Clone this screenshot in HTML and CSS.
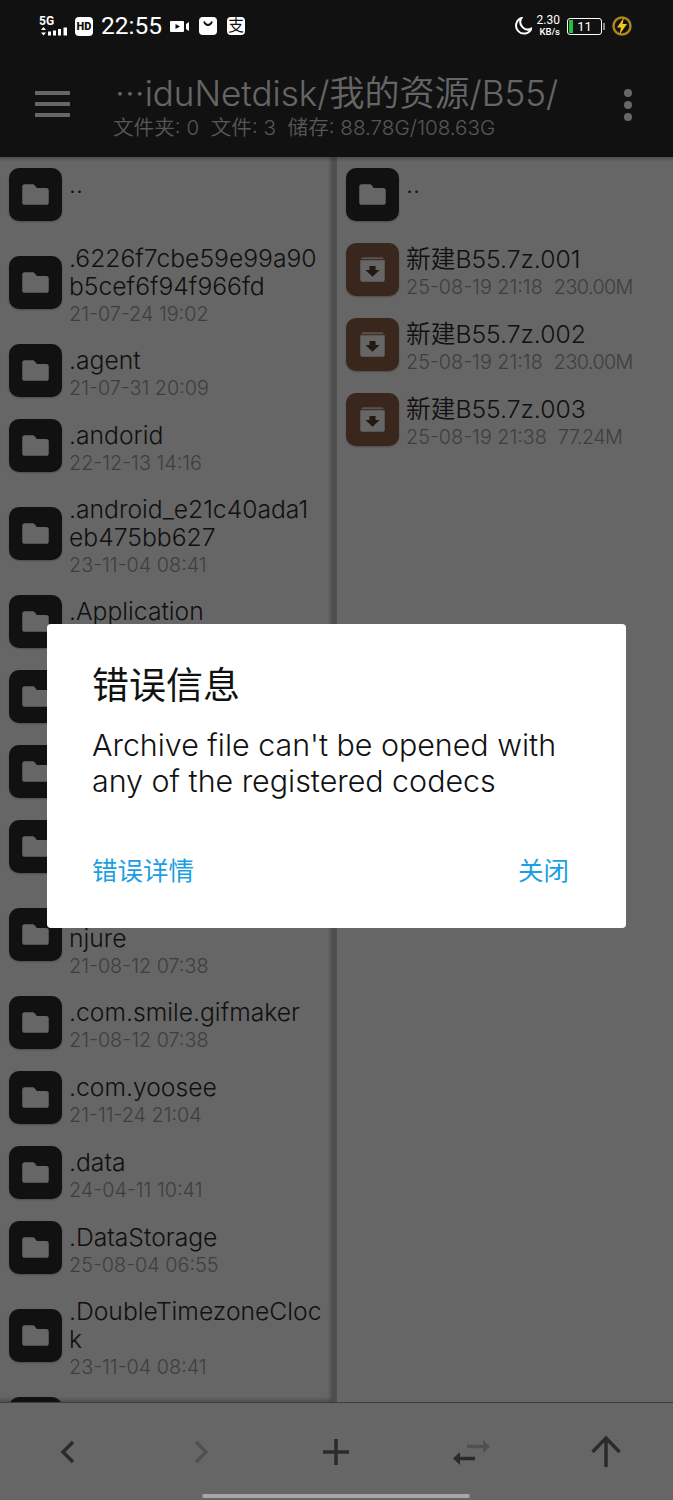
FILE: index.html
```html
<!DOCTYPE html>
<html lang="zh-CN">
<head>
	<meta charset="UTF-8">
	<meta content="width=device-width, initial-scale=1.0" name="viewport">
	<title>错误信息</title>
	<link rel="stylesheet" href="styles.css">
</head>
<body>
<svg width="0" height="0" class="defs">
	<symbol id="folder" viewBox="0 0 52 52">
		<path d="M15.500 16h8a2 2 0 0 1 1.500.700l2.300 2.800h9.200a2.500 2.500 0 0 1 2.500 2.500V33.500a2.500 2.500 0 0 1-2.500 2.500h-21a2.500 2.500 0 0 1-2.500-2.500v-15a2.500 2.500 0 0 1 2.500-2.500z" fill="#fff"/>
	</symbol>
	<symbol id="archive" viewBox="0 0 52 52">
		<path d="M17 14h18a2 2 0 0 1 2 2H15a2 2 0 0 1 2-2z" fill="#fff" opacity=".7"/>
		<path d="M14 17h24v19a2 2 0 0 1-2 2H16a2 2 0 0 1-2-2z" fill="#fff"/>
		<path d="M23 22.500h6v4h4l-7 6.500-7-6.500h4z" fill="#5a3d2e"/>
	</symbol>
</svg>

<div class="app">
	<header class="appbar">
		<div class="status">
			<div class="status-left">
				<div class="net">
					<span class="net-label">5G</span>
					<svg width="30" height="9" viewBox="0 0 30 9">
						<path d="M4.500 0 7 3H2zM4.500 8.500 2 5.500h5z" fill="#fff"/>
						<path d="M9 4.500h3v4H9zM14 3.500h3v5h-3zM19 2h3v6.500h-3zM24.500.5h3.500v8h-3.500z" fill="#fff"/>
					</svg>
				</div>
				<span class="hd">HD</span>
				<span class="clock">22:55</span>
				<svg class="cam" width="19" height="11" viewBox="0 0 19 11">
					<path d="M1 0h12a1 1 0 0 1 1 1v9a1 1 0 0 1-1 1H1a1 1 0 0 1-1-1V1a1 1 0 0 1 1-1z" fill="#fff"/>
					<path d="M5.500 3 10 5.500 5.500 8z" fill="#111"/>
					<path d="M16 3 19 1v9l-3-2z" fill="#fff"/>
				</svg>
				<svg width="18" height="18" viewBox="0 0 18 18">
					<rect width="18" height="18" rx="4" fill="#fff"/>
					<path d="M5 4.500c.8 2.600 2.500 3.500 4 3.500s3.200-.9 4-3.500" fill="none" stroke="#111" stroke-width="1.800"/>
				</svg>
				<span class="alipay">支</span>
			</div>
			<div class="status-right">
				<svg class="moon" width="17" height="18" viewBox="0 0 17 18">
					<path d="M6.500 1A8 8 0 1 0 16.500 11.500 7.500 7.500 0 0 1 6.500 1z" fill="none" stroke="#fff" stroke-width="2"/>
				</svg>
				<div class="speed"><span>2.30</span><span class="speed-unit">KB/s</span></div>
				<div class="battery"><i class="battery-level"></i><span>11</span></div>
				<svg width="20" height="20" viewBox="0 0 20 20">
					<circle cx="10" cy="10" r="8.500" fill="none" stroke="#a8871c" stroke-width="2.500"/>
					<path d="M12 1.500 5 11.500h4L7.500 18.500 15 8h-4.500z" fill="#f5c518"/>
				</svg>
			</div>
		</div>
		<div class="bar">
			<div class="menu"><i></i><i></i><i></i></div>
			<div class="path">
				<div class="path-title">···iduNetdisk/我的资源/B55/</div>
				<div class="path-info">文件夹: 0&nbsp; 文件: 3&nbsp; 储存: 88.78G/108.63G</div>
			</div>
			<div class="more"><i></i><i></i><i></i></div>
		</div>
	</header>

	<main class="panels">
		<section class="panel panel-left">
			<div class="row"><svg class="icon"><use href="#folder"/></svg><div class="text"><div class="name">..</div><div class="meta">&nbsp;</div></div></div>
			<div class="row"><svg class="icon"><use href="#folder"/></svg><div class="text"><div class="name">.6226f7cbe59e99a90b5cef6f94f966fd</div><div class="meta">21-07-24 19:02</div></div></div>
			<div class="row"><svg class="icon"><use href="#folder"/></svg><div class="text"><div class="name">.agent</div><div class="meta">21-07-31 20:09</div></div></div>
			<div class="row"><svg class="icon"><use href="#folder"/></svg><div class="text"><div class="name">.andorid</div><div class="meta">22-12-13 14:16</div></div></div>
			<div class="row"><svg class="icon"><use href="#folder"/></svg><div class="text"><div class="name">.android_e21c40ada1eb475bb627</div><div class="meta">23-11-04 08:41</div></div></div>
			<div class="row"><svg class="icon"><use href="#folder"/></svg><div class="text"><div class="name">.Application</div><div class="meta">&nbsp;</div></div></div>
			<div class="row"><svg class="icon"><use href="#folder"/></svg></div>
			<div class="row"><svg class="icon"><use href="#folder"/></svg></div>
			<div class="row"><svg class="icon"><use href="#folder"/></svg></div>
			<div class="row"><svg class="icon"><use href="#folder"/></svg><div class="text"><div class="name">&nbsp;<br>njure</div><div class="meta">21-08-12 07:38</div></div></div>
			<div class="row"><svg class="icon"><use href="#folder"/></svg><div class="text"><div class="name">.com.smile.gifmaker</div><div class="meta">21-08-12 07:38</div></div></div>
			<div class="row"><svg class="icon"><use href="#folder"/></svg><div class="text"><div class="name">.com.yoosee</div><div class="meta">21-11-24 21:04</div></div></div>
			<div class="row"><svg class="icon"><use href="#folder"/></svg><div class="text"><div class="name">.data</div><div class="meta">24-04-11 10:41</div></div></div>
			<div class="row"><svg class="icon"><use href="#folder"/></svg><div class="text"><div class="name">.DataStorage</div><div class="meta">25-08-04 06:55</div></div></div>
			<div class="row"><svg class="icon"><use href="#folder"/></svg><div class="text"><div class="name">.DoubleTimezoneClock</div><div class="meta">23-11-04 08:41</div></div></div>
			<div class="row"><svg class="icon"><use href="#folder"/></svg><div class="text"><div class="name">.dual</div><div class="meta">&nbsp;</div></div></div>
		</section>
		<section class="panel panel-right">
			<div class="row"><svg class="icon"><use href="#folder"/></svg><div class="text"><div class="name">..</div><div class="meta">&nbsp;</div></div></div>
			<div class="row"><svg class="icon icon-archive"><use href="#archive"/></svg><div class="text"><div class="name">新建B55.7z.001</div><div class="meta">25-08-19 21:18&nbsp; <span class="size">230.00M</span></div></div></div>
			<div class="row"><svg class="icon icon-archive"><use href="#archive"/></svg><div class="text"><div class="name">新建B55.7z.002</div><div class="meta">25-08-19 21:18&nbsp; <span class="size">230.00M</span></div></div></div>
			<div class="row"><svg class="icon icon-archive"><use href="#archive"/></svg><div class="text"><div class="name">新建B55.7z.003</div><div class="meta">25-08-19 21:38&nbsp; <span class="size">77.24M</span></div></div></div>
		</section>
	</main>

	<footer class="toolbar">
		<svg width="28" height="28" viewBox="0 0 28 28"><path d="M20 4 10 14l10 10" class="tool-line"/></svg>
		<svg width="28" height="28" viewBox="0 0 28 28"><path d="M8 4 18 14 8 24" class="tool-line tool-off"/></svg>
		<svg width="28" height="28" viewBox="0 0 28 28"><path d="M14 1v26M1 14h26" class="tool-line"/></svg>
		<svg width="38" height="32" viewBox="0 0 38 32">
			<path d="M15 10.500h17" class="tool-line tool-off"/>
			<path d="M31 4l7 6.500-7 6.500z" class="tool-head tool-head-off"/>
			<path d="M23 22.500H7" class="tool-line"/>
			<path d="M8 16l-7 6.500 7 6.500z" class="tool-head"/>
		</svg>
		<svg width="34" height="34" viewBox="0 0 34 34"><path d="M17 32V4M3.500 17 17 3l13.500 14" class="tool-line"/></svg>
	</footer>

	<div class="scrim">
		<div class="dialog">
			<h2 class="dialog-title">错误信息</h2>
			<p class="dialog-body">Archive file can't be opened with any of the registered codecs</p>
			<div class="dialog-actions">
				<span>错误详情</span>
				<span>关闭</span>
			</div>
		</div>
	</div>
	<div class="home"></div>
</div>
</body>
</html>
```

FILE: styles.css
```css
html, body {
	margin: 0;
	height: 100%;
	overflow: hidden;
	background: #fff;
}
body {
	font-family: Inter, "Noto Sans CJK SC", sans-serif;
}
.defs {
	display: block;
	height: 0;
}
.app {
	position: relative;
	display: flex;
	flex-direction: column;
	width: 673px;
	height: 1500px;
	overflow: hidden;
}

/* status bar sits above the scrim */
.appbar {
	flex: none;
	height: 157px;
	background: #2b2b2b;
}
.status {
	position: relative;
	z-index: 3;
	display: flex;
	justify-content: space-between;
	align-items: center;
	height: 52px;
	padding: 0 41px 0 39px;
	color: #fff;
	font-family: Roboto, "Noto Sans CJK SC", sans-serif;
}
.status-left, .status-right {
	display: flex;
	align-items: center;
}
.status-left {
	gap: 8px;
}
.status-right {
	gap: 6px;
}
.net {
	display: flex;
	flex-direction: column;
	width: 30px;
	margin-right: -2px;
}
.net-label {
	font-size: 12px;
	font-weight: 700;
	line-height: 11px;
}
.hd {
	width: 18px;
	height: 19px;
	border-radius: 4px;
	background: #fff;
	color: #111;
	font-size: 11px;
	font-weight: 900;
	line-height: 19px;
	text-align: center;
}
.clock {
	font-size: 24.500px;
	line-height: 30px;
}
.cam {
	margin-right: 2px;
}
.moon {
	margin-right: -1px;
}
.alipay {
	width: 18px;
	height: 18px;
	margin-left: 2px;
	border-radius: 4px;
	background: #fff;
	color: #111;
	font-size: 16px;
	line-height: 18px;
	text-align: center;
}
.speed {
	display: flex;
	flex-direction: column;
	align-items: flex-end;
	font-size: 12px;
	line-height: 11px;
}
.speed-unit {
	font-size: 9.500px;
	font-weight: 500;
}
.battery {
	position: relative;
	width: 33px;
	height: 15px;
	border: 1.500px solid #fff;
	border-radius: 3px;
	font-size: 13px;
	line-height: 15px;
	text-align: center;
	margin-left: 1px;
	margin-right: 4px;
}
.battery::after {
	content: "";
	position: absolute;
	right: -4px;
	top: 4px;
	width: 2px;
	height: 7px;
	background: #888;
}
.battery-level {
	position: absolute;
	left: 1px;
	top: 1px;
	bottom: 1px;
	width: 4px;
	background: #1fc23c;
}

.bar {
	display: flex;
	align-items: flex-start;
	height: 105px;
	color: #fff;
}
.menu {
	display: flex;
	flex-direction: column;
	gap: 7px;
	width: 35px;
	margin: 39px 43px 0 35px;
}
.menu i {
	display: block;
	height: 4px;
	background: #fff;
}
.path {
	flex: 1;
	min-width: 0;
}
.path-title {
	font-size: 35px;
	font-weight: 350;
	line-height: 40px;
	margin: 21px 0 0 2px;
	white-space: nowrap;
}
.path-info {
	font-size: 20.600px;
	font-weight: 350;
	line-height: 26px;
	margin-top: 2px;
	color: #d8d8d8;
}
.more {
	display: flex;
	flex-direction: column;
	gap: 4px;
	margin: 37px 41px 0 0;
}
.more i {
	display: block;
	width: 8px;
	height: 8px;
	border-radius: 50%;
	background: #fff;
}

.panels {
	position: relative;
	flex: 1;
	min-height: 0;
	display: grid;
	grid-template-columns: 334px 1fr;
	column-gap: 3px;
	background: #c4c4c4;
}
.panels::before {
	content: "";
	position: absolute;
	left: 0;
	right: 0;
	top: 0;
	height: 5px;
	background: linear-gradient(rgba(0, 0, 0, .22), transparent);
}
.panel {
	overflow: hidden;
	background: #fff;
}
.panel-left {
	box-shadow: inset -3px -2px 4px rgba(0, 0, 0, .3);
}
.row {
	display: flex;
	align-items: center;
	gap: 7px;
	min-height: 75px;
	box-sizing: border-box;
	padding: 5.500px 12px 5.500px 9px;
}
.icon {
	flex: none;
	width: 53px;
	height: 53px;
	border-radius: 10px;
	background: #2b2b2b;
	box-shadow: 0 1px 2px rgba(0, 0, 0, .25);
}
.icon-archive {
	background: #8e5f4a;
}
.text {
	min-width: 0;
	padding-top: 6px;
	word-break: break-all;
}
.name {
	font-size: 24.700px;
	font-weight: 350;
	line-height: 28px;
	color: #2b2b2b;
}
.meta {
	font-size: 19.800px;
	font-weight: 350;
	line-height: 28px;
	color: #9c9c9c;
}
.size {
	letter-spacing: -.6px;
}

.toolbar {
	flex: none;
	height: 98px;
	box-sizing: border-box;
	border-top: 1px solid #999;
	display: grid;
	grid-template-columns: repeat(5, 134.600px);
	justify-items: center;
	align-items: center;
	background: #fff;
}
.tool-line {
	fill: none;
	stroke: #6b6b6b;
	stroke-width: 3.500;
}
.tool-head {
	fill: #6b6b6b;
}
.tool-off {
	stroke: #c8c8c8;
}
.tool-head-off {
	fill: #c8c8c8;
}

.scrim {
	position: absolute;
	inset: 0;
	z-index: 2;
	display: flex;
	justify-content: center;
	align-items: center;
	box-sizing: border-box;
	padding-top: 52px;
	background: rgba(0, 0, 0, .6);
}
.dialog {
	width: 579px;
	height: 304px;
	box-sizing: border-box;
	padding: 38px 57px 0 45px;
	border-radius: 4px;
	background: #fff;
	color: #111;
}
.dialog-title {
	margin: 0;
	font-size: 37px;
	font-weight: 400;
	line-height: 48px;
}
.dialog-body {
	margin: 17px 0 0;
	font-size: 30.400px;
	font-weight: 350;
	line-height: 36px;
}
.dialog-actions {
	display: flex;
	justify-content: space-between;
	margin-top: 54px;
	font-size: 25.500px;
	line-height: 36px;
	color: #1a9fe3;
}
.home {
	position: absolute;
	left: 202px;
	bottom: 2px;
	width: 268px;
	height: 4px;
	border-radius: 2px;
	background: #a6a6a6;
	z-index: 3;
}
```
